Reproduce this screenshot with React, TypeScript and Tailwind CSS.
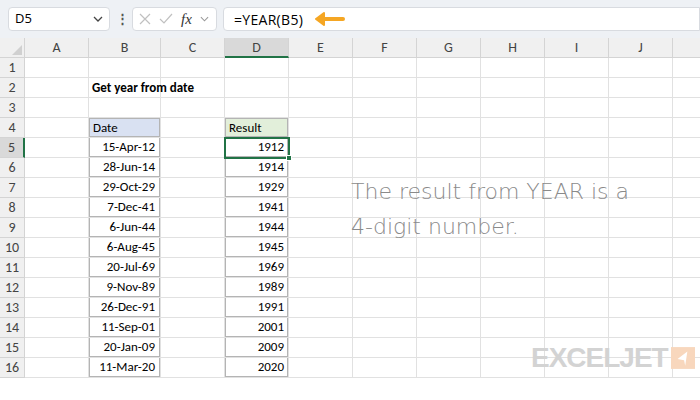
import React from "react";

const cols = ["A","B","C","D","E","F","G","H","I","J"];
const dates = ["15-Apr-12","28-Jun-14","29-Oct-29","7-Dec-41","6-Jun-44","6-Aug-45","20-Jul-69","9-Nov-89","26-Dec-91","11-Sep-01","20-Jan-09","11-Mar-20"];
const years = ["1912","1914","1929","1941","1944","1945","1969","1989","1991","2001","2009","2020"];

function cell(r: number, c: number): React.ReactNode {
  if (r === 2 && c === 1) return <span className="font-bold whitespace-nowrap pl-[3px]">Get year from date</span>;
  if (r === 4 && c === 1) return <div className="h-full w-full bg-[#d9e1f2] border border-[#b4b4b4] pl-[3px] flex items-center">Date</div>;
  if (r === 4 && c === 3) return <div className="h-full w-full bg-[#e2efda] border border-[#b4b4b4] pl-[3px] flex items-center">Result</div>;
  if (r >= 5 && r <= 16 && c === 1) return <div className="h-full w-full border-x border-b border-[#b4b4b4] pr-[4px] flex items-center justify-end">{dates[r-5]}</div>;
  if (r >= 5 && r <= 16 && c === 3) return <div className="h-full w-full border-x border-b border-[#b4b4b4] pr-[3px] flex items-center justify-end">{years[r-5]}</div>;
  return null;
}

export default function App() {
  return (
    <div className="w-[700px] h-[400px] overflow-hidden bg-white relative text-[13px] text-black" style={{ fontFamily: "Calibri, Carlito, 'Liberation Sans', sans-serif" }}>
      <div className="h-[38px] bg-[#eef1f5] flex items-center px-[8px] gap-[6px]" style={{ fontFamily: "'Segoe UI', 'Open Sans', sans-serif" }}>
        <div className="w-[102px] h-[24px] bg-white border border-[#d8dbe0] rounded-[4px] flex items-center justify-between px-[6px] text-[13px]">
          <span>D5</span>
          <svg width="10" height="6" viewBox="0 0 10 6"><path d="M1 1l4 4 4-4" stroke="#444" strokeWidth="1.3" fill="none"/></svg>
        </div>
        <div className="text-[#555] font-bold w-[10px] text-center">⋮</div>
        <div className="w-[85px] h-[24px] bg-white border border-[#d8dbe0] rounded-[4px] flex items-center gap-[8px] px-[6px]">
          <svg width="12" height="12" viewBox="0 0 12 12"><path d="M1 1l10 10M11 1L1 11" stroke="#c0c0c0" strokeWidth="1.2"/></svg>
          <svg width="14" height="12" viewBox="0 0 14 12"><path d="M1 6l4 4 8-9" stroke="#c0c0c0" strokeWidth="1.2" fill="none"/></svg>
          <span className="italic text-[15px] text-[#333]" style={{ fontFamily: "'Liberation Serif', serif" }}>fx</span>
          <svg width="9" height="6" viewBox="0 0 10 6"><path d="M1 1l4 4 4-4" stroke="#999" strokeWidth="1.2" fill="none"/></svg>
        </div>
        <div className="flex-1 h-[24px] bg-white border border-[#d8dbe0] rounded-l-[4px] flex items-center pl-[10px] gap-[10px] mr-[-8px]">
          <span className="text-[14px] tracking-[0.3px]">=YEAR(B5)</span>
          <svg width="32" height="14" viewBox="0 0 32 14"><path d="M30 7H9" stroke="#f5a623" strokeWidth="4" strokeLinecap="round"/><path d="M11 1L3 7l8 6z" fill="#f5a623" stroke="#f5a623" strokeWidth="2" strokeLinejoin="round"/></svg>
        </div>
      </div>
      <div className="grid" style={{ gridTemplateColumns: "25px 64px 72px 64px 64px 64px 64px 64px 64px 64px 64px 40px", gridAutoRows: "20px" }}>
        <div className="bg-[#f0f0f0] border-r border-b border-[#d4d4d4] relative">
          <svg className="absolute right-[2px] bottom-[2px]" width="10" height="10"><path d="M10 0V10H0z" fill="#d0d0d0"/></svg>
        </div>
        {[...cols, ""].map((c, i) => (
          <div key={i} className={`border-r border-b border-[#d4d4d4] flex items-center justify-center text-[#444] text-[14px] ${c === "D" ? "bg-[#d9d9d9] border-b-2 border-b-[#217346]" : "bg-[#f0f0f0]"}`}>{c}</div>
        ))}
        {Array.from({ length: 16 }, (_, ri) => {
          const r = ri + 1;
          return (
            <React.Fragment key={r}>
              <div className={`border-r border-b border-[#d4d4d4] flex items-center justify-center text-[#444] text-[14px] ${r === 5 ? "bg-[#d9d9d9] border-r-2 border-r-[#217346]" : "bg-[#f0f0f0]"}`}>{r}</div>
              {Array.from({ length: 11 }, (_, c) => (
                <div key={c} className="border-r border-b border-[#e1e1e1] flex items-center overflow-visible">{cell(r, c)}</div>
              ))}
            </React.Fragment>
          );
        })}
      </div>
      <div className="absolute left-[224px] top-[137px] w-[66px] h-[22px] border-2 border-[#217346]">
        <div className="absolute right-[-4px] bottom-[-4px] w-[6px] h-[6px] bg-[#217346] border border-white" />
      </div>
      <div className="absolute left-[351px] top-[174px] text-[#8a8a8a] text-[22px] leading-[35px]" style={{ fontFamily: "'Comic Sans MS', 'DejaVu Sans', sans-serif", fontWeight: 300 }}>
        The result from YEAR is a<br />4-digit number.
      </div>
      <div className="absolute left-[531px] top-[344px] flex items-center gap-[3px]">
        <span className="text-[#d3d3d3] text-[28px] font-black tracking-[-1px] leading-none" style={{ fontFamily: "'Liberation Sans', sans-serif" }}>EXCELJET</span>
        <svg width="24" height="22" viewBox="0 0 22 20"><rect width="22" height="20" fill="#f8d7bd"/><path d="M15 4L6 11l6 1 1 5z" fill="white"/></svg>
      </div>
    </div>
  );
}
